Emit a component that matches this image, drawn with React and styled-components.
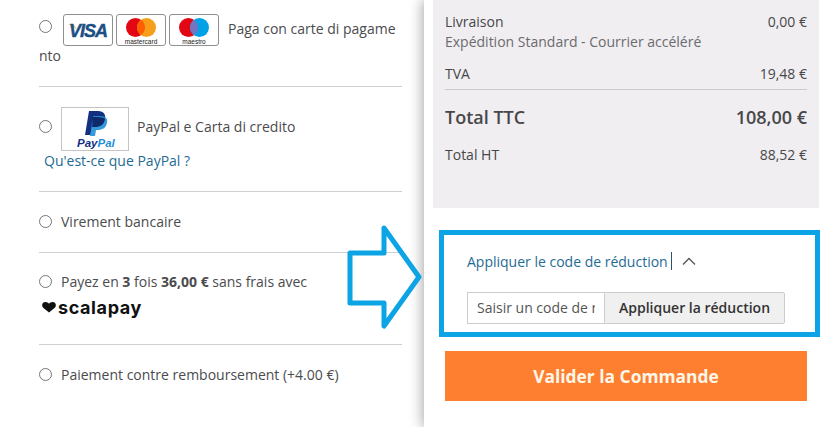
import React from 'react';
import styled, { createGlobalStyle } from 'styled-components';

const GlobalStyle = createGlobalStyle`
  html, body {
    margin: 0;
    padding: 0;
    height: 427px;
    overflow: hidden;
    background: #fff;
  }
  * { box-sizing: border-box; }
`;

const Page = styled.div`
  position: relative;
  display: flex;
  width: 825px;
  height: 427px;
  overflow: hidden;
  font-family: "Open Sans", sans-serif;
  font-size: 14px;
  color: #4b4b4d;
`;

const PaymentColumn = styled.div`
  width: 424px;
  padding: 0 22px 0 39px;
  flex: none;
`;

const PaymentRow = styled.div`
  height: ${p => p.$height}px;
  padding-top: ${p => p.$top}px;
  border-bottom: ${p => (p.$last ? 'none' : '1px solid #cfcfcf')};
`;

const Line = styled.div`
  display: flex;
  align-items: ${p => (p.$top ? 'flex-start' : 'center')};
`;

const Radio = styled.input.attrs({ type: 'radio', name: 'payment' })`
  appearance: none;
  width: 13px;
  height: 13px;
  margin: ${p => p.$top || 0}px ${p => p.$gap || 9}px 0 0;
  flex: none;
  border: 1px solid #767676;
  border-radius: 50%;
  background: #fff;
`;

const Label = styled.span`
  margin-top: ${p => p.$top || 0}px;
  white-space: nowrap;
`;

const WrappedEnd = styled.div`
  height: 20px;
  line-height: 20px;
`;

const CardList = styled.span`
  display: flex;
  gap: 3px;
  margin-right: 9px;
  flex: none;
`;

const Card = styled.span`
  display: block;
  width: 50px;
  height: 32px;
  border: 1px solid #8f8f8f;
  border-radius: 3px;
  background: #fff;
  overflow: hidden;
`;

const PayPalBox = styled.span`
  display: flex;
  flex-direction: column;
  align-items: center;
  width: 68px;
  height: 44px;
  margin-right: 8px;
  border: 1px solid #c4c4c4;
  flex: none;
`;

const Link = styled.a`
  display: block;
  color: #1f6b94;
  text-decoration: none;
  margin: ${p => p.$margin || 0};
`;

const ScalapayLogo = styled.div`
  display: flex;
  align-items: center;
  gap: 2px;
  margin: 5px 0 0 3px;
  height: 22px;
  font-family: "Inter", sans-serif;
  font-size: 18px;
  font-weight: 700;
  letter-spacing: 0.6px;
  color: #111;
`;

const Summary = styled.div`
  position: relative;
  flex: 1;
  padding: 0 6px 0 9px;
  background: #fff;
  box-shadow: -2px 0 12px rgba(0, 0, 0, 0.32);
`;

const Totals = styled.div`
  height: 208px;
  padding: 11px 12px 0;
  background: #f0eef1;
  color: #47474a;
`;

const TotalRow = styled.div`
  display: flex;
  justify-content: space-between;
  align-items: center;
  height: ${p => p.$height || 20}px;
  margin-top: ${p => p.$top || 0}px;
  font-size: ${p => p.$size || 14}px;
  font-weight: ${p => p.$weight || 400};
  color: ${p => p.$color || 'inherit'};
`;

const Rule = styled.div`
  height: 1px;
  margin-top: 6px;
  background: #cbc9cc;
`;

const PromoBox = styled.div`
  margin: 22px -1px 0 6px;
  height: 107px;
  padding: 16px 28px 0 23px;
  border: 5px solid #0ca4e4;
  background: #fff;
`;

const PromoToggle = styled.div`
  display: flex;
  align-items: center;
  height: 20px;
`;

const Caret = styled.span`
  width: 1px;
  height: 18px;
  margin-left: 3px;
  background: #33536b;
`;

const Chevron = styled.svg`
  width: 16px;
  height: 10px;
  margin-left: 9px;
`;

const PromoForm = styled.div`
  display: flex;
  height: 32px;
  margin-top: 21px;
`;

const PromoInput = styled.input`
  width: 137px;
  height: 32px;
  padding: 0 9px 2px;
  border: 1px solid #cccccc;
  border-right: none;
  border-radius: 0;
  outline: none;
  font-family: "Open Sans", sans-serif;
  font-size: 14px;
  background: #fff;
  &::placeholder { color: #555; opacity: 1; }
`;

const PromoButton = styled.button`
  width: 181px;
  height: 32px;
  padding: 0 0 2px;
  border: 1px solid #cccccc;
  border-radius: 0 2px 2px 0;
  background: #f0f0f0;
  color: #333;
  font-family: "Open Sans", sans-serif;
  font-size: 14px;
  font-weight: 600;
`;

const SubmitButton = styled.button`
  display: block;
  width: 362px;
  height: 50px;
  margin: 14px 0 0 12px;
  border: none;
  background: #fd7f2f;
  color: #fff6ea;
  font-family: "Open Sans", sans-serif;
  font-size: 17.4px;
  font-weight: 700;
`;

const Arrow = styled.svg`
  position: absolute;
  left: 340px;
  top: 220px;
  width: 84px;
  height: 114px;
`;

function VisaCard() {
  return (
    <Card>
      <svg width="48" height="30" viewBox="0 0 48 30">
        <path d="M4 9 C8 8.500 11 10 13 15 C11 12 8 10.500 4 9Z" fill="#e2a33b" />
        <text x="5" y="22" fontFamily="Liberation Sans" fontSize="18" fontWeight="700" fontStyle="italic" fill="#1b4f84" stroke="#1b4f84" strokeWidth="0.4" textLength="39">VISA</text>
      </svg>
    </Card>
  );
}

function CircleCard({ right, middle, label }) {
  return (
    <Card>
      <svg width="48" height="30" viewBox="0 0 48 30">
        <circle cx="18.500" cy="12.500" r="9.500" fill="#e30613" />
        <circle cx="29.500" cy="12.500" r="9.500" fill={right} />
        <path d="M24 4.750 A9.500 9.500 0 0 1 24 20.250 A9.500 9.500 0 0 1 24 4.750Z" fill={middle} />
        <text x="24" y="28.500" textAnchor="middle" fontFamily="Liberation Sans" fontSize="6.500" fill="#222">{label}</text>
      </svg>
    </Card>
  );
}

function PayPalLogo() {
  return (
    <PayPalBox>
      <svg width="66" height="42" viewBox="0 0 66 42">
        <path d="M27 3 H36 C42 3 44 7 43 11 C42 17 38 19 33 19 H30 L28.500 27 H23 Z" fill="#12307f" />
        <path d="M31 8 H38 C44 8 46 11 45 15 C44 20 40 22 36 22 H34 L33 28 H28 Z" fill="#1f8fd8" opacity="0.9" />
        <path d="M30 9 H37 C39 9.500 43 10 43 11 C42 17 38 19 33 19 H30 L30.500 16 Z" fill="#0f2a6b" />
        <text x="15" y="39" fontFamily="Liberation Sans" fontSize="11.500" fontWeight="700" fontStyle="italic" fill="#12307f">Pay<tspan fill="#1f8fd8">Pal</tspan></text>
      </svg>
    </PayPalBox>
  );
}

function App() {
  return (
    <Page>
      <GlobalStyle />
      <PaymentColumn>
        <PaymentRow $height={87} $top={14}>
          <Line $top>
            <Radio $top={6} $gap={11} />
            <CardList>
              <VisaCard />
              <CircleCard right="#f79e1b" middle="#ff5f00" label="mastercard" />
              <CircleCard right="#00a2e5" middle="#7673c0" label="maestro" />
            </CardList>
            <Label $top={5}>Paga con carte di pagame</Label>
          </Line>
          <WrappedEnd>nto</WrappedEnd>
        </PaymentRow>
        <PaymentRow $height={105} $top={20}>
          <Line $top>
            <Radio $top={13} />
            <PayPalLogo />
            <Label $top={10}>PayPal e Carta di credito</Label>
          </Line>
          <Link href="#" $margin="0 0 0 5px">Qu'est-ce que PayPal ?</Link>
        </PaymentRow>
        <PaymentRow $height={61} $top={20}>
          <Line>
            <Radio />
            Virement bancaire
          </Line>
        </PaymentRow>
        <PaymentRow $height={92} $top={19}>
          <Line>
            <Radio />
            <span>Payez en <b>3</b> fois <b>36,00 €</b> sans frais avec</span>
          </Line>
          <ScalapayLogo>
            <svg width="14" height="12" viewBox="0 0 14 12">
              <path d="M7 11.500 L1.200 6.800 C-0.600 5.200 -0.200 1 3.400 1 C5 1 6.300 1.700 7 2.800 C7.700 1.700 9 1 10.600 1 C14.200 1 14.600 5.200 12.800 6.800Z" fill="#111" />
            </svg>
            scalapay
          </ScalapayLogo>
        </PaymentRow>
        <PaymentRow $height={60} $top={20} $last>
          <Line>
            <Radio />
            Paiement contre remboursement (+4.00 €)
          </Line>
        </PaymentRow>
      </PaymentColumn>
      <Summary>
        <Totals>
          <TotalRow><span>Livraison</span><span>0,00 €</span></TotalRow>
          <TotalRow $color="#6b6b6e"><span>Expédition Standard - Courrier accéléré</span></TotalRow>
          <TotalRow $top={12}><span>TVA</span><span>19,48 €</span></TotalRow>
          <Rule />
          <TotalRow $top={15} $height={24} $size={18} $weight={600}><span>Total TTC</span><span>108,00 €</span></TotalRow>
          <TotalRow $top={15}><span>Total HT</span><span>88,52 €</span></TotalRow>
        </Totals>
        <PromoBox>
          <PromoToggle>
            <Link href="#">Appliquer le code de réduction</Link>
            <Caret />
            <Chevron viewBox="0 0 16 10">
              <path d="M2 8.500 L8 2.500 L14 8.500" fill="none" stroke="#555" strokeWidth="1.300" />
            </Chevron>
          </PromoToggle>
          <PromoForm>
            <PromoInput placeholder="Saisir un code de réduction" />
            <PromoButton>Appliquer la réduction</PromoButton>
          </PromoForm>
        </PromoBox>
        <SubmitButton>Valider la Commande</SubmitButton>
      </Summary>
      <Arrow viewBox="0 0 84 114">
        <path d="M10 33 H44 V8 L79 57 L44 106 V83 H10 Z" fill="none" stroke="#0ca4e4" strokeWidth="5" strokeLinejoin="round" />
      </Arrow>
    </Page>
  );
}

export default App;
